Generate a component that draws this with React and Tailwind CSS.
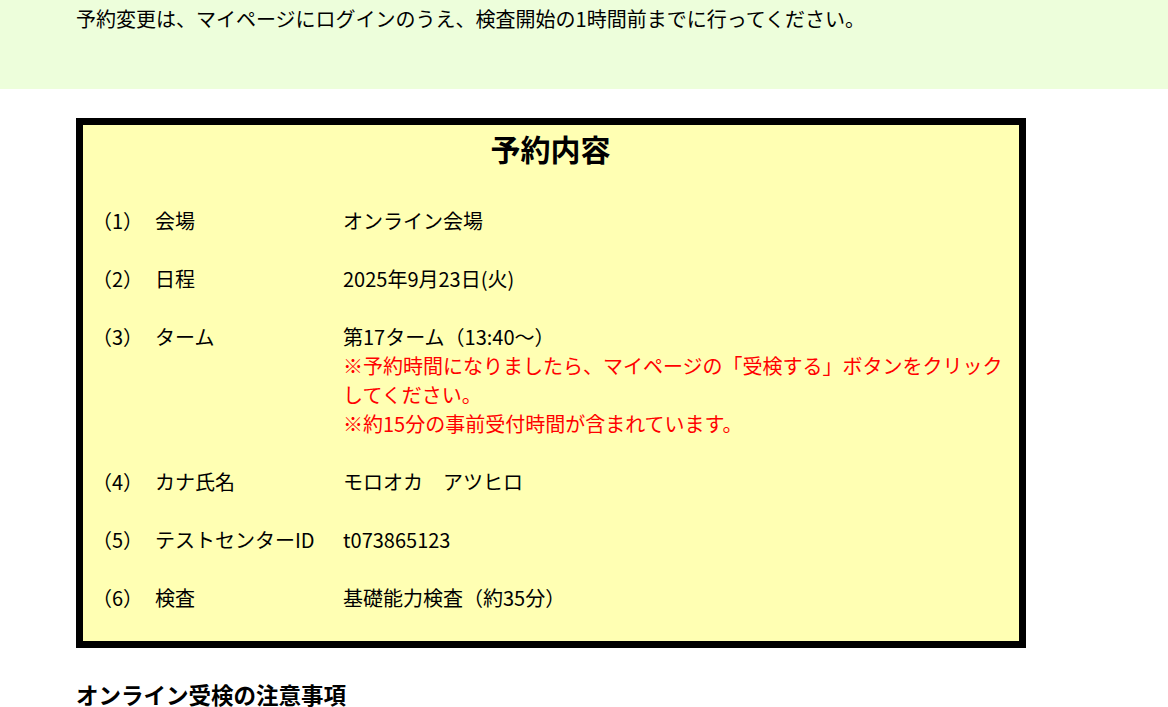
import React from "react";

const font = { fontFamily: '"Noto Sans CJK JP", "Noto Sans", sans-serif' };

const rows = [
  { no: "（1）", label: "会場", value: ["オンライン会場"] },
  { no: "（2）", label: "日程", value: ["2025年9月23日(火)"] },
  {
    no: "（3）",
    label: "ターム",
    value: ["第17ターム（13:40～）"],
    notes: [
      "※予約時間になりましたら、マイページの「受検する」ボタンをクリックしてください。",
      "※約15分の事前受付時間が含まれています。",
    ],
  },
  { no: "（4）", label: "カナ氏名", value: ["モロオカ　アツヒロ"] },
  { no: "（5）", label: "テストセンターID", value: ["t073865123"] },
  { no: "（6）", label: "検査", value: ["基礎能力検査（約35分）"] },
];

export default function App() {
  return (
    <div className="w-[1168px] min-h-[707px] bg-white text-black" style={font}>
      <div className="bg-[#edfedb] h-[89px] pl-[76px] pt-[4px]">
        <p className="text-[20px] leading-[29px]">
          予約変更は、マイページにログインのうえ、検査開始の1時間前までに行ってください。
        </p>
      </div>
      <div className="pl-[76px] pt-[29px]">
        <div className="w-[950px] border-[7px] border-black bg-[#ffffb3] pl-[9px] pr-[10px] pb-[29px] pt-[1px]">
          <h2 className="text-center text-[30px] leading-[44px] font-bold">予約内容</h2>
          <div className="mt-[36px] flex flex-col gap-[29px] text-[20px] leading-[29px]">
            {rows.map((r) => (
              <div key={r.no} className="flex">
                <div className="w-[63px] shrink-0">{r.no}</div>
                <div className="w-[188px] shrink-0">{r.label}</div>
                <div className="flex-1">
                  {r.value.map((v) => (
                    <div key={v}>{v}</div>
                  ))}
                  {r.notes &&
                    r.notes.map((n) => (
                      <div key={n} className="text-[#ff0000]">
                        {n}
                      </div>
                    ))}
                </div>
              </div>
            ))}
          </div>
        </div>
        <h3 className="mt-[30px] text-[22.5px] leading-[32px] font-bold">オンライン受検の注意事項</h3>
      </div>
    </div>
  );
}
